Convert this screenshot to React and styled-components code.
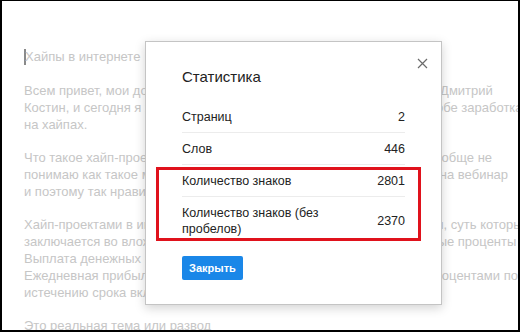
import styled, { createGlobalStyle } from "styled-components";

const GlobalStyle = createGlobalStyle`
  html, body {
    margin: 0;
    padding: 0;
    background: #fff;
  }
  * {
    box-sizing: border-box;
  }
`;

const Frame = styled.div`
  position: relative;
  width: 520px;
  height: 332px;
  overflow: hidden;
  background: #fff;
  border-style: solid;
  border-color: #000;
  border-width: 1px 2px 2px 2px;
  font-family: "Liberation Sans", Arial, sans-serif;
`;

const Document = styled.div`
  padding: 47px 0 0 22px;
  color: #c6c6c6;
  font-size: 13px;
  line-height: 17px;
`;

const Heading = styled.p`
  margin: 0 0 17px;
  white-space: nowrap;
  display: flex;
  align-items: center;
`;

const Cursor = styled.span`
  display: inline-block;
  width: 2px;
  height: 16px;
  background: #8a8a8a;
  margin-right: -1px;
`;

const Paragraph = styled.p`
  margin: 0 0 16px;
  white-space: nowrap;
`;

const Line = styled.span`
  display: block;
`;

const Dialog = styled.div`
  position: absolute;
  left: 143px;
  top: 40px;
  width: 297px;
  height: 264px;
  background: #fff;
  border: 1px solid #c4c4c4;
  box-shadow: 0 3px 10px rgba(0, 0, 0, 0.18);
  padding: 26px 36px 0 36px;
  display: flex;
  flex-direction: column;
`;

const Close = styled.button`
  position: absolute;
  top: 16px;
  right: 13px;
  width: 11px;
  height: 11px;
  padding: 0;
  border: none;
  background: none;
  display: flex;
`;

const Title = styled.h2`
  margin: 0 0 15px;
  font-size: 15px;
  line-height: 18px;
  font-weight: 400;
  color: #222;
`;

const Row = styled.div`
  display: flex;
  align-items: center;
  justify-content: space-between;
  padding: 8px 0 7px;
  border-bottom: ${(p) => (p.$last ? "none" : "1px solid #ececec")};
  font-size: 12.5px;
  line-height: 16px;
  color: #222;
`;

const Label = styled.span`
  max-width: ${(p) => (p.$narrow ? "150px" : "none")};
`;

const Value = styled.span`
  text-align: right;
`;

const Highlight = styled.div`
  position: absolute;
  left: 10px;
  top: 125px;
  width: 265px;
  height: 74px;
  border: 3px solid #e0121c;
  pointer-events: none;
`;

const Footer = styled.div`
  margin-top: 12px;
`;

const Button = styled.button`
  width: 61px;
  height: 24px;
  border: none;
  border-radius: 2px;
  background: #1a87e8;
  color: #fff;
  font-family: "Liberation Sans", Arial, sans-serif;
  font-weight: 700;
  font-size: 11px;
  padding: 0;
`;

const stats = [
  { label: "Страниц", value: "2" },
  { label: "Слов", value: "446" },
  { label: "Количество знаков", value: "2801" },
  { label: "Количество знаков (без пробелов)", value: "2370", narrow: true },
];

const App = () => {
  return (
    <>
      <GlobalStyle />
      <Frame>
        <Document>
          <Heading>
            <Cursor />
            Хайпы в интернете
          </Heading>
          <Paragraph>
            <Line>Всем привет, мои дорогие друзья и гости моего блога. С вами снова Дмитрий</Line>
            <Line>Костин, и сегодня я хочу рассказать Вам об одном интересном способе заработка</Line>
            <Line>на хайпах.</Line>
          </Paragraph>
          <Paragraph>
            <Line>Что такое хайп-проекты? Если честно, то до недавнего времени я вообще не</Line>
            <Line>понимаю как такое может существовать, пока я сама не записалась на вебинар</Line>
            <Line>и поэтому так нравится многим.</Line>
          </Paragraph>
          <Paragraph>
            <Line>Хайп-проектами в интернете называют такие финансовые пирамиды, суть которых</Line>
            <Line>заключается во вложении денежных средств под высокие ежедневные проценты</Line>
            <Line>Выплата денежных вознаграждений.</Line>
            <Line>Ежедневная прибыль или единоразовый возврат вклада вместе с процентами по</Line>
            <Line>истечению срока вклада.</Line>
          </Paragraph>
          <Paragraph>
            <Line>Это реальная тема или развод</Line>
          </Paragraph>
        </Document>

        <Dialog>
          <Close aria-label="Закрыть">
            <svg width="11" height="11" viewBox="0 0 11 11">
              <path d="M1 1 L10 10 M10 1 L1 10" stroke="#6b6b6b" strokeWidth="1.2" />
            </svg>
          </Close>
          <Title>Статистика</Title>
          {stats.map((s, i) => (
            <Row key={s.label} $last={i === stats.length - 1}>
              <Label $narrow={s.narrow}>{s.label}</Label>
              <Value>{s.value}</Value>
            </Row>
          ))}
          <Footer>
            <Button>Закрыть</Button>
          </Footer>
          <Highlight />
        </Dialog>
      </Frame>
    </>
  );
};

export default App;
